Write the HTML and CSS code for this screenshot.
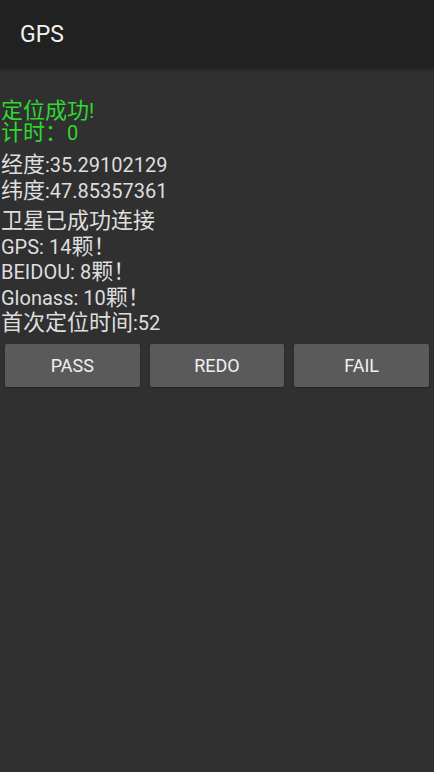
FILE: index.html
```html
<!DOCTYPE html>
<html lang="zh">
<head>
  <meta charset="UTF-8" />
  <meta name="viewport" content="width=device-width, initial-scale=1.0"/>
  <title>GPS</title>
  <link rel="stylesheet" href="styles.css">
</head>
<body>

<div class="toolbar">
  <h1>GPS</h1>
</div>

<div class="content">
  <div class="status">
    <p><span class="zh">定位成功</span>!</p>
    <p><span class="zh">计时：</span>0</p>
  </div>

  <div class="coords">
    <p><span class="zh">经度</span>:35.29102129</p>
    <p><span class="zh">纬度</span>:47.85357361</p>
  </div>

  <div class="sats">
    <p><span class="zh">卫星已成功连接</span></p>
    <p>GPS: 14<span class="zh">颗！</span></p>
    <p>BEIDOU: 8<span class="zh">颗！</span></p>
    <p>Glonass: 10<span class="zh">颗！</span></p>
    <p><span class="zh">首次定位时间</span>:52</p>
  </div>

  <div class="buttons">
    <button type="button">PASS</button>
    <button type="button">REDO</button>
    <button type="button">FAIL</button>
  </div>
</div>

</body>
</html>
```

FILE: styles.css
```css
body {
  margin: 0;
  background: #303030;
  font-family: Roboto, "Noto Sans CJK SC", sans-serif;
  color: #dedede;
  height: 100vh;
}
.toolbar {
  height: 68px;
  background: #212121;
  display: flex;
  align-items: center;
  padding-left: 20px;
  box-shadow: 0 2px 4px rgba(0,0,0,0.25);
}
.toolbar h1 {
  margin: 0;
  font-size: 23px;
  font-weight: 400;
  color: #f2f2f2;
}
.content {
  padding: 32px 0 0 1px;
}
p {
  margin: 0;
  font-size: 20px;
  line-height: 25.5px;
}
.zh {
  font-family: "Noto Sans CJK SC", sans-serif;
  font-size: 22px;
  line-height: 0;
}
.status p {
  color: #2fd82f;
  line-height: 22px;
}
.coords {
  margin-top: 9px;
}
.sats {
  margin-top: 5px;
}
.buttons {
  display: flex;
  gap: 10px;
  padding: 7px 5px 0 4px;
}
button {
  flex: 1;
  height: 43px;
  background: #5a5a5a;
  border: none;
  border-radius: 2px;
  color: #f0f0f0;
  font-family: Roboto, sans-serif;
  font-size: 18px;
  box-shadow: 0 1px 2px rgba(0,0,0,0.3);
}
```
